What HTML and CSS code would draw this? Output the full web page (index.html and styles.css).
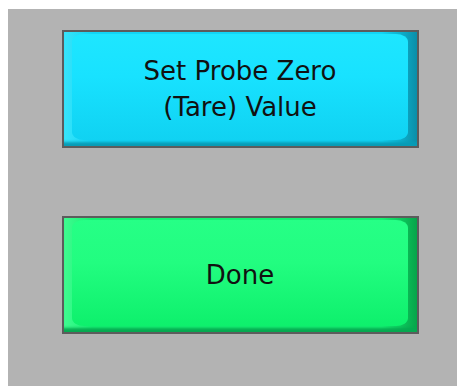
FILE: index.html
```html
<!DOCTYPE html>
<html>
<head>
  <meta charset="UTF-8">
  <title>Probe Zero</title>
  <link rel="stylesheet" href="styles.css">
</head>
<body>
  <div class="panel">
    <button class="bouton cyan"><span class="face">Set Probe Zero<br>(Tare) Value</span></button>
    <button class="bouton vert"><span class="face">Done</span></button>
  </div>
</body>
</html>
```

FILE: styles.css
```css
body{
    margin: 0;
    padding: 0;
    background-color: #fff;
}
.panel{
    margin: 9px 0 0 8px;
    height: 377px;
    background-color: #b3b3b3;
    display: flex;
    flex-direction: column;
    padding: 21px 0 0 54px;
    box-sizing: border-box;
    gap: 68px;
}
.bouton{
    width: 357px;
    height: 118px;
    border: 2px solid #5c5c5c;
    padding: 0;
    display: flex;
    font-family: 'DejaVu Sans', Verdana, sans-serif;
    font-size: 26px;
    line-height: 36px;
    color: #111;
}
.face{
    flex: 1;
    display: flex;
    align-items: center;
    justify-content: center;
    text-align: center;
    border-radius: 12px / 8px;
    margin: 2px 9px 6px 8px;
    padding-top: 3px;
}
.cyan{
    background: linear-gradient(to right, #38e4fa, #12d6f6 8%, #12d6f6 90%, #0a8ea8);
    box-shadow: inset 0 -6px 3px -2px #089cb6;
}
.cyan .face{
    background: linear-gradient(#1ee6ff, #18e2ff 40%, #10d2f2);
}
.vert{
    background: linear-gradient(to right, #40fb90, #14f272 8%, #14f272 90%, #07a44a);
    box-shadow: inset 0 -6px 3px -2px #06a850;
}
.vert .face{
    background: linear-gradient(#26ff86, #22fd80 40%, #0ef06c);
}
```
